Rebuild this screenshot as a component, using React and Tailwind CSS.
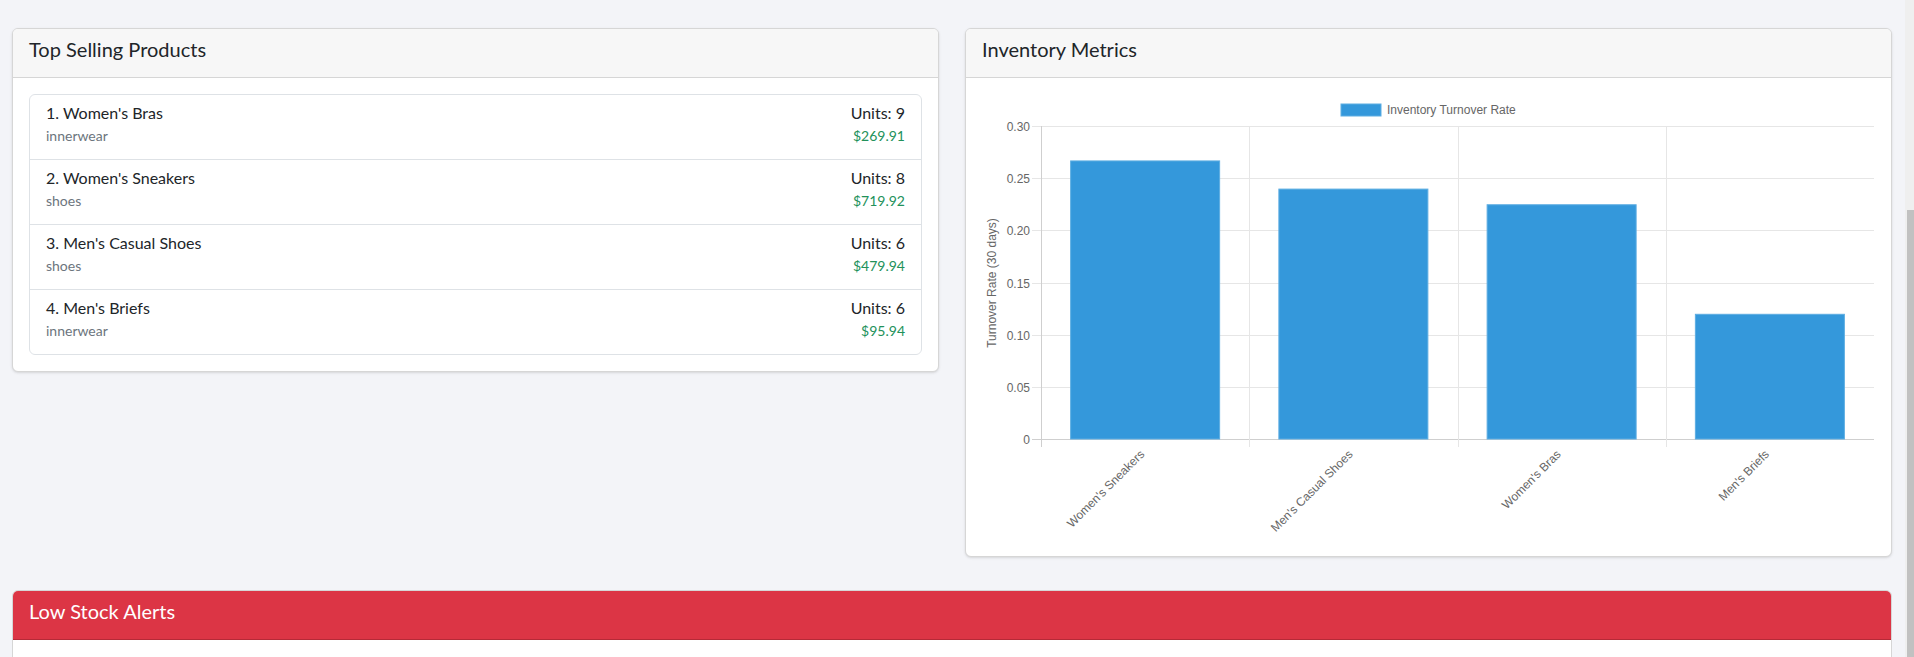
import React from "react";

const products = [
  { name: "1. Women's Bras", category: "innerwear", units: 9, revenue: "$269.91" },
  { name: "2. Women's Sneakers", category: "shoes", units: 8, revenue: "$719.92" },
  { name: "3. Men's Casual Shoes", category: "shoes", units: 6, revenue: "$479.94" },
  { name: "4. Men's Briefs", category: "innerwear", units: 6, revenue: "$95.94" },
];

const turnover = [
  { label: "Women's Sneakers", value: 0.267 },
  { label: "Men's Casual Shoes", value: 0.24 },
  { label: "Women's Bras", value: 0.225 },
  { label: "Men's Briefs", value: 0.12 },
];

// chart geometry, canvas pixels
const W = 892;
const H = 446;
const left = 59;
const top = 32;
const bottom = 345;
const catW = (W - left) / 4;
const barW = 150;
const yOf = (v) => bottom - (v / 0.3) * (bottom - top);
const ticks = [0.3, 0.25, 0.2, 0.15, 0.1, 0.05, 0];

function TurnoverChart() {
  const font = "'Liberation Sans', Arial, sans-serif";
  return (
    <svg width={W} height={H} className="block">
      {/* legend */}
      <rect x={359} y={10} width={40} height={12} fill="#3498db" stroke="#5dade2" />
      <text x={405} y={20} fontSize="12" fill="#666" fontFamily={font}>
        Inventory Turnover Rate
      </text>

      {/* horizontal grid + y ticks */}
      {ticks.map((t) => {
        const y = Math.round(yOf(t)) + 0.5;
        return (
          <g key={t}>
            <line x1={50} x2={W} y1={y} y2={y} stroke={t === 0 ? "#cfcfcf" : "#e6e6e6"} />
            <text x={48} y={y + 4} fontSize="12" fill="#666" textAnchor="end" fontFamily={font}>
              {t === 0 ? "0" : t.toFixed(2)}
            </text>
          </g>
        );
      })}

      {/* vertical grid */}
      {[0, 1, 2, 3, 4].map((i) => {
        const x = Math.round(left + i * catW) + 0.5;
        return (
          <line
            key={i}
            x1={x}
            x2={x}
            y1={top}
            y2={i === 4 ? bottom : bottom + 8}
            stroke={i === 0 ? "#cfcfcf" : "#e6e6e6"}
          />
        );
      })}

      {/* bars */}
      {turnover.map((d, i) => {
        const x = left + i * catW + (catW - barW) / 2;
        const y = yOf(d.value);
        return (
          <rect
            key={d.label}
            x={x + 0.5}
            y={y + 0.5}
            width={barW - 1}
            height={bottom - y - 0.5}
            fill="#3498db"
            stroke="#5dade2"
          />
        );
      })}

      {/* x labels */}
      {turnover.map((d, i) => {
        const cx = left + i * catW + catW / 2;
        const cy = 361;
        return (
          <text
            key={d.label}
            x={cx}
            y={cy}
            fontSize="12"
            fill="#666"
            textAnchor="end"
            fontFamily={font}
            transform={`rotate(-45 ${cx} ${cy})`}
          >
            {d.label}
          </text>
        );
      })}

      {/* y title */}
      <text
        x={14}
        y={189}
        fontSize="12"
        fill="#666"
        textAnchor="middle"
        fontFamily={font}
        transform="rotate(-90 14 189)"
      >
        Turnover Rate (30 days)
      </text>
    </svg>
  );
}

function Card({ title, children }) {
  return (
    <div className="bg-white border border-[#d6d6d6] rounded-md shadow-sm overflow-hidden">
      <div className="bg-[#f7f7f7] border-b border-[#d6d6d6] px-4 pt-2 pb-4">
        <h5 className="text-xl leading-6 text-[#212529]">{title}</h5>
      </div>
      <div className="p-4">{children}</div>
    </div>
  );
}

export default function App() {
  return (
    <div className="flex h-[657px] w-full overflow-hidden bg-[#f3f4f8] font-[Lato,sans-serif]">
      <div className="flex-1 min-w-0 pl-3 pr-[13px] pt-[28px]">
        <div className="grid grid-cols-2 gap-[26px] items-start">
          <Card title="Top Selling Products">
            <div className="border border-[#dee2e6] rounded-md">
              {products.map((p, i) => (
                <div
                  key={p.name}
                  className={`flex justify-between px-4 pt-[6px] pb-[12px] ${
                    i < products.length - 1 ? "border-b border-[#dee2e6]" : ""
                  }`}
                >
                  <div>
                    <div className="text-base leading-6 text-[#212529]">{p.name}</div>
                    <div className="text-sm leading-[22px] text-[#6c757d]">{p.category}</div>
                  </div>
                  <div className="text-right">
                    <div className="text-base leading-6 text-[#212529]">Units: {p.units}</div>
                    <div className="text-sm leading-[22px] text-[#22915a]">{p.revenue}</div>
                  </div>
                </div>
              ))}
            </div>
          </Card>

          <Card title="Inventory Metrics">
            <TurnoverChart />
          </Card>
        </div>

        <div className="mt-[33px] bg-white border border-[#d6d6d6] rounded-t-md overflow-hidden h-[200px]">
          <div className="bg-[#dc3545] border-b border-[#b52a37] px-4 pt-2 pb-4">
            <h5 className="text-xl leading-6 text-white">Low Stock Alerts</h5>
          </div>
        </div>
      </div>

      {/* scrollbar */}
      <div className="w-[9px] bg-[#efefef] pl-[2px] pt-[210px]">
        <div className="h-[500px] bg-[#c1c1c1]" />
      </div>
    </div>
  );
}
